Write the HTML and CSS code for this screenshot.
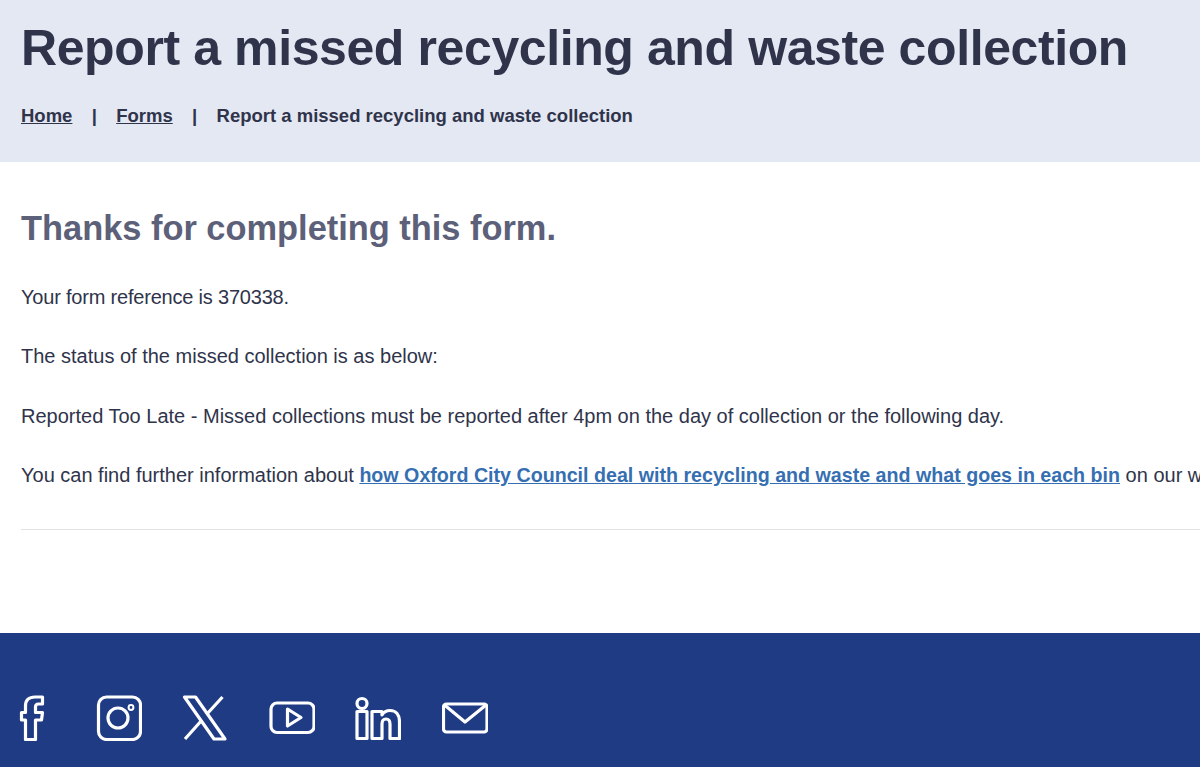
FILE: index.html
```html
<!DOCTYPE html>
<html lang="en">
<head>
<meta charset="UTF-8">
<title>Report a missed recycling and waste collection</title>
<link rel="stylesheet" href="styles.css">
</head>
<body>

<header class="page-header">
    <h1 class="page-title">Report a missed recycling and waste collection</h1>
    <nav class="breadcrumb">
        <a href="#">Home</a>
        <span class="sep">|</span>
        <a href="#">Forms</a>
        <span class="sep">|</span>
        <span>Report a missed recycling and waste collection</span>
    </nav>
</header>

<main class="content">
    <h2 class="thanks">Thanks for completing this form.</h2>
    <p class="reference">Your form reference is 370338.</p>
    <p>The status of the missed collection is as below:</p>
    <p>Reported Too Late - Missed collections must be reported after 4pm on the day of collection or the following day.</p>
    <p>You can find further information about <a href="#">how Oxford City Council deal with recycling and waste and what goes in each bin</a> on our website.</p>
    <hr class="rule">
</main>

<footer class="page-footer">
    <div class="social">
        <!-- facebook -->
        <svg class="icon" viewBox="0 0 46 46"><path d="M16.500 44.500V25H12.500V17.500H16.500V11C16.500 5 20 2 26 2H33.500V9H29.500C27.500 9 26.500 10 26.500 12V17.500H33.500L32.500 25H26.500V44.500Z"/></svg>
        <!-- instagram -->
        <svg class="icon" viewBox="0 0 46 46"><rect x="2.500" y="2" width="42" height="42.500" rx="8"/><circle cx="22" cy="23" r="10"/><circle class="dot" cx="35" cy="12.500" r="2.400"/></svg>
        <!-- x -->
        <svg class="icon" viewBox="0 0 46 46"><path d="M2.500 2H13.500L43 44H32Z"/><path d="M40.500 2L24.500 19.500M20 25L3 44"/></svg>
        <!-- youtube -->
        <svg class="icon" viewBox="0 0 46 46"><rect x="2" y="8" width="43" height="29.500" rx="6"/><path d="M18.500 14L32 22.500L18.500 31Z"/></svg>
        <!-- linkedin -->
        <svg class="icon" viewBox="0 0 46 46"><circle cx="7" cy="8.500" r="5"/><path d="M2 16.500H12V43.500H2Z"/><path d="M17 16.500H27V20C28.500 17.500 31 15.500 35 15.500C41 15.500 44.500 20 44.500 27V43.500H35V29C35 25.500 33.500 24 31 24C28.500 24 27 25.500 27 29V43.500H17Z"/></svg>
        <!-- mail -->
        <svg class="icon" viewBox="0 0 46 46"><rect x="1.500" y="9" width="43.500" height="28" rx="3"/><path d="M2.500 10L23 27L44 10"/></svg>
    </div>
</footer>

</body>
</html>
```

FILE: styles.css
```css
html, body {
    margin: 0;
    padding: 0;
    height: 100%;
    overflow: hidden;
}

body {
    display: flex;
    flex-direction: column;
    font-family: "Liberation Sans", Arial, sans-serif;
    color: #2f344b;
    background-color: #fff;
}

.page-header {
    background-color: #e4e8f3;
    height: 162px;
    padding: 0 21px;
    box-sizing: border-box;
}

.page-title {
    margin: 0;
    padding-top: 18px;
    font-size: 50px;
    letter-spacing: -0.4px;
    line-height: 60px;
    font-weight: 700;
    white-space: nowrap;
}

.breadcrumb {
    display: flex;
    gap: 19.300px;
    margin-top: 26px;
    font-size: 18.500px;
    line-height: 24px;
    font-weight: 700;
    white-space: nowrap;
}

.breadcrumb a {
    color: inherit;
}

.content {
    flex: 1;
    padding: 0 0 0 21px;
    white-space: nowrap;
}

.thanks {
    margin: 44px 0 0 0;
    font-size: 34.400px;
    line-height: 44px;
    font-weight: 700;
    color: #5c6079;
}

.content p {
    margin: 0;
    padding-top: 35.200px;
    font-size: 20px;
    line-height: 24px;
}

.content .reference {
    letter-spacing: -0.2px;
}

.content a {
    color: #356fb2;
    font-size: 19.650px;
    font-weight: 700;
}

.rule {
    margin: 42.400px 0 0 0;
    border: 0;
    border-top: 1px solid #e2e2e2;
}

.page-footer {
    background-color: #1f3b84;
    height: 134px;
    box-sizing: border-box;
    padding: 62px 0 0 9px;
}

.social {
    display: flex;
    gap: 40.600px;
}

.icon {
    width: 46px;
    height: 46px;
    flex: none;
    fill: none;
    stroke: #fff;
    stroke-width: 3.200;
    stroke-linejoin: round;
}

.icon .dot {
    stroke-width: 2;
}
```
